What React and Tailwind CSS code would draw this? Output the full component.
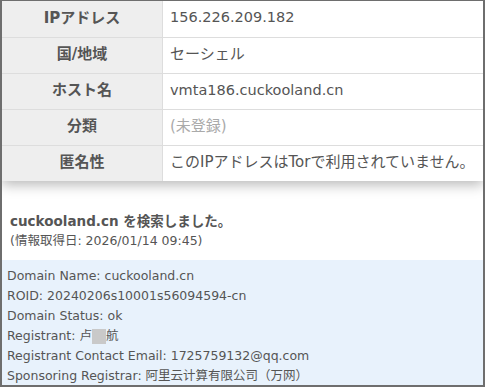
import React from "react";

const rows = [
  { label: "IPアドレス", value: "156.226.209.182" },
  { label: "国/地域", value: "セーシェル", cjk: true },
  { label: "ホスト名", value: "vmta186.cuckooland.cn" },
  { label: "分類", value: "(未登録)", muted: true, cjk: true },
  { label: "匿名性", value: "このIPアドレスはTorで利用されていません。", cjk: true },
];

const font = { fontFamily: '"DejaVu Sans", "Noto Sans CJK JP", sans-serif' };

export default function App() {
  return (
    <div
      className="w-[485px] h-[387px] overflow-hidden bg-white border-t border-l-2 border-r-2 border-b-2 border-[#6e6e6e] text-[#555]"
      style={font}
    >
      {/* IP info table */}
      <div className="shadow-[0_4px_12px_rgba(0,0,0,0.28)] relative z-10">
        {rows.map((r, i) => (
          <div
            key={r.label}
            className={`flex h-[36px] ${i > 0 ? "border-t border-[#dddddd]" : ""}`}
          >
            <div className="w-[161px] shrink-0 bg-[#eeeeee] border-r border-[#dddddd] flex items-center justify-center font-bold text-[15px] pb-[2px]">
              {r.label}
            </div>
            <div
              className={`flex-1 flex items-center pl-[7px] pb-[2px] ${
                r.cjk ? "text-[15px]" : "text-[14.5px]"
              } ${r.muted ? "text-[#aaaaaa]" : ""}`}
            >
              {r.value}
            </div>
          </div>
        ))}
      </div>

      {/* whois result */}
      <div className="pt-[30px] px-[8px]">
        <div className="font-bold text-[13.5px] leading-[20px]">
          cuckooland.cn を検索しました。
        </div>
        <div className="text-[12.5px] leading-[20px]">(情報取得日: 2026/01/14 09:45)</div>
      </div>
      <div className="mt-[9px] bg-[#e8f2fc] pt-[6px] px-[5px] text-[12.5px] leading-[20px]">
        <div>Domain Name: cuckooland.cn</div>
        <div>ROID: 20240206s10001s56094594-cn</div>
        <div>Domain Status: ok</div>
        <div className="flex items-center">
          <span>Registrant: 卢</span>
          <span className="inline-block w-[14px] h-[15px] bg-[#c9c9c9]" />
          <span>航</span>
        </div>
        <div>Registrant Contact Email: 1725759132@qq.com</div>
        <div>Sponsoring Registrar: 阿里云计算有限公司（万网）</div>
      </div>
    </div>
  );
}
